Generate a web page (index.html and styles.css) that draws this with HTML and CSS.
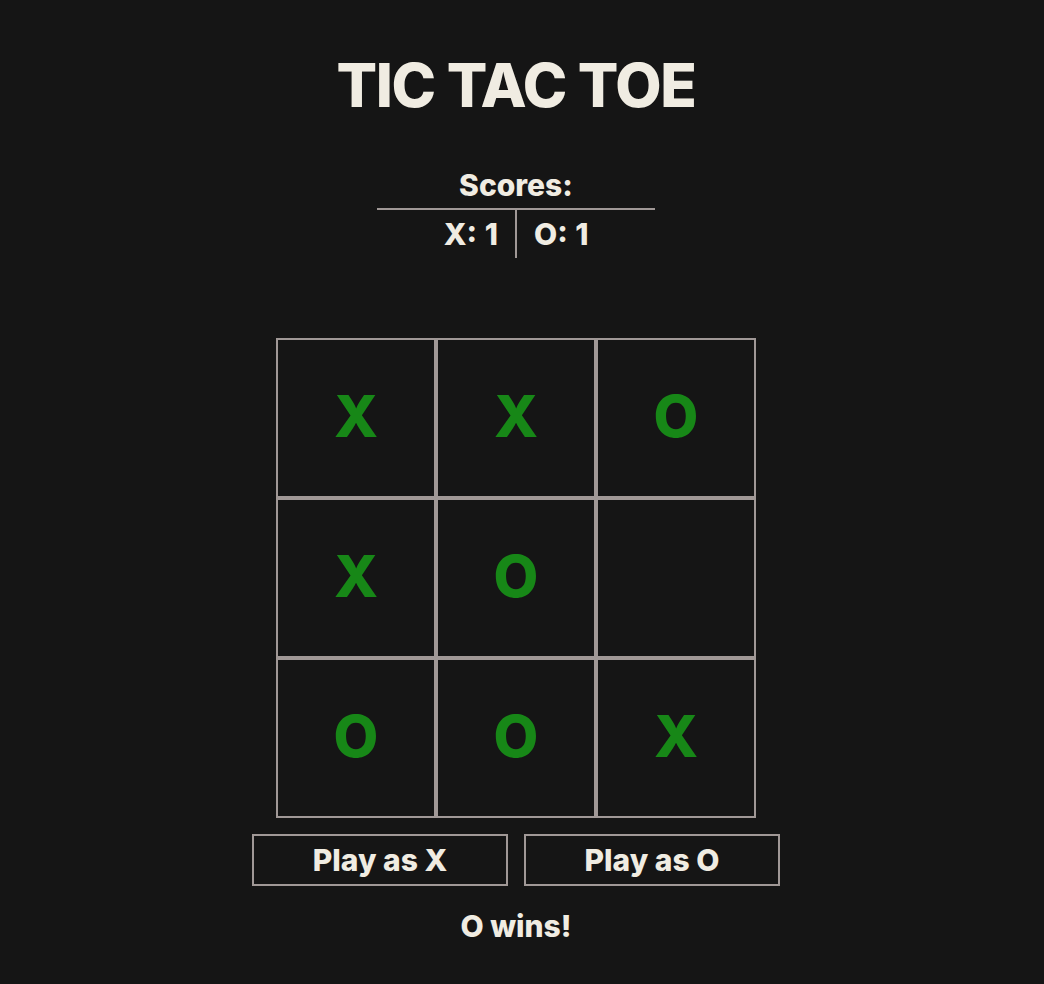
FILE: index.html
```html
<!DOCTYPE html>
<html>
<head>
<meta charset="utf-8">
<link rel="stylesheet" href="styles.css">
</head>
<body>
<main class="app">
  <h1 class="title">TIC TAC TOE</h1>
  <table class="scores">
    <thead>
      <tr><th colspan="2" class="scores-head">Scores:</th></tr>
    </thead>
    <tbody>
      <tr>
        <td class="score score-x">X: 1</td>
        <td class="score score-o">O: 1</td>
      </tr>
    </tbody>
  </table>
  <div class="board">
    <div class="cell">X</div>
    <div class="cell">X</div>
    <div class="cell">O</div>
    <div class="cell">X</div>
    <div class="cell">O</div>
    <div class="cell"></div>
    <div class="cell">O</div>
    <div class="cell">O</div>
    <div class="cell">X</div>
  </div>
  <div class="controls">
    <button class="btn">Play as X</button>
    <button class="btn">Play as O</button>
  </div>
  <p class="status">O wins!</p>
</main>
</body>
</html>
```
FILE: styles.css
```css
html, body {
  margin: 0;
  padding: 0;
  background: #151515;
}
body {
  font-family: Inter, "Noto Sans", sans-serif;
  color: #f0ece2;
}
.app {
  display: flex;
  flex-direction: column;
  align-items: center;
  padding-top: 50px;
  padding-right: 12px;
}
.title {
  margin: 0;
  font-size: 60px;
  font-weight: 800;
  line-height: 70px;
  letter-spacing: -1.3px;
}
.scores {
  margin-top: 42px;
  border-collapse: collapse;
  width: 278px;
}
.scores-head {
  font-size: 30px;
  font-weight: 800;
  line-height: 46px;
  padding: 0;
  border-bottom: 2px solid #a09896;
}
.score {
  font-size: 30px;
  font-weight: 800;
  line-height: 48px;
  padding: 0 17px;
  width: 50%;
  word-spacing: 1px;
}
.score-x {
  text-align: right;
  border-right: 2px solid #a09896;
}
.score-o {
  text-align: left;
}
.board {
  margin-top: 80px;
  display: grid;
  grid-template-columns: repeat(3, 160px);
  grid-template-rows: repeat(3, 160px);
}
.cell {
  box-sizing: border-box;
  border: 2px solid #a09896;
  display: flex;
  align-items: center;
  justify-content: center;
  padding-bottom: 4px;
  font-size: 58px;
  font-weight: 800;
  color: #178717;
}
.controls {
  margin-top: 16px;
  display: flex;
  gap: 16px;
}
.btn {
  width: 256px;
  height: 52px;
  background: #151515;
  border: 2px solid #a09896;
  color: #f0ece2;
  font-family: Inter, "Noto Sans", sans-serif;
  font-size: 30px;
  font-weight: 800;
  padding: 0;
}
.status {
  margin: 20px 0 0;
  font-size: 30px;
  font-weight: 800;
  line-height: 40px;
}
```
